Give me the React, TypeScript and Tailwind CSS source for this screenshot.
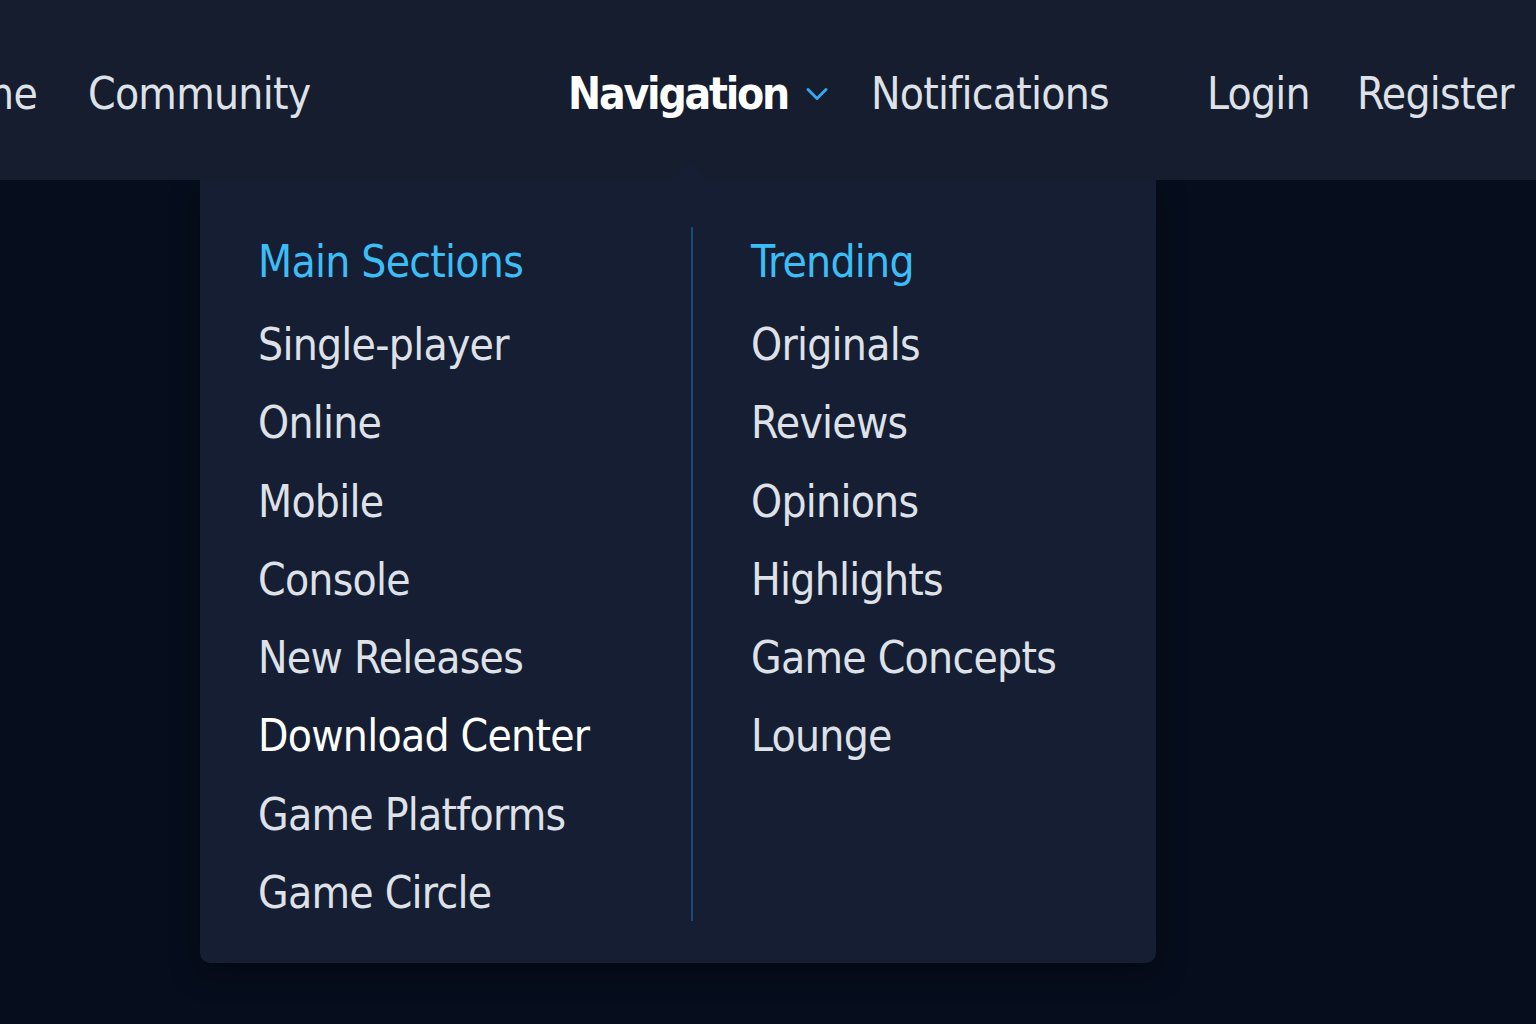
import { ChevronDown } from "lucide-react";

const mainSections = [
	"Single-player",
	"Online",
	"Mobile",
	"Console",
	"New Releases",
	"Download Center",
	"Game Platforms",
	"Game Circle",
];

const trending = ["Originals", "Reviews", "Opinions", "Highlights", "Game Concepts", "Lounge"];

const font = {
	fontFamily: '"DejaVu Sans Condensed", "Liberation Sans Narrow", "Noto Sans", sans-serif',
};

function MenuColumn({ title, items }: { title: string; items: string[] }) {
	return (
		<div className="flex flex-col">
			<div className="h-[83px] text-[44px] leading-[83px] tracking-[-0.75px] text-[#3dbdf5]">{title}</div>
			<div className="mt-[3px] flex flex-col">
				{items.map((item) => (
					<a
						key={item}
						href="#"
						className={
							item === "Download Center"
								? "h-[78.3px] text-[44px] leading-[78.3px] tracking-[-0.75px] text-white"
								: "h-[78.3px] text-[44px] leading-[78.3px] tracking-[-0.75px] text-[#dee1e7]"
						}
					>
						{item}
					</a>
				))}
			</div>
		</div>
	);
}

export default function App() {
	return (
		<div className="min-h-[1024px] w-full overflow-hidden bg-[#060d1c]" style={font}>
			<header className="relative flex h-[180px] items-center bg-[#151d2f] pt-[8px] text-[44px] tracking-[-0.75px] text-[#dee1e7]">
				<div className="-ml-[100px] w-[137px] text-right">Home</div>
				<div className="ml-[51px] w-[480px]">Community</div>
				<div className="flex w-[303px] items-center">
					<span className="w-[231px] font-semibold tracking-[-2.2px] text-white">Navigation</span>
					<ChevronDown className="h-[36px] w-[36px] text-[#38a6ee]" strokeWidth={2} />
				</div>
				<div className="w-[336px]">Notifications</div>
				<div className="w-[150px]">Login</div>
				<div>Register</div>
				<div className="absolute bottom-0 left-[672px] h-0 w-0 border-x-[18px] border-b-[18px] border-x-transparent border-b-[#151e33]" />
			</header>

			<div className="ml-[200px] flex w-[956px] rounded-b-[10px] bg-[#151e33] shadow-[0_10px_30px_rgba(0,0,0,0.35)]">
				<div className="w-[491px] pl-[58px] pt-[40px] pb-[31px]">
					<MenuColumn title="Main Sections" items={mainSections} />
				</div>
				<div className="mt-[47px] mb-[42px] w-[2px] bg-[#1d4a74]" />
				<div className="pl-[58px] pt-[40px]">
					<MenuColumn title="Trending" items={trending} />
				</div>
			</div>
		</div>
	);
}
